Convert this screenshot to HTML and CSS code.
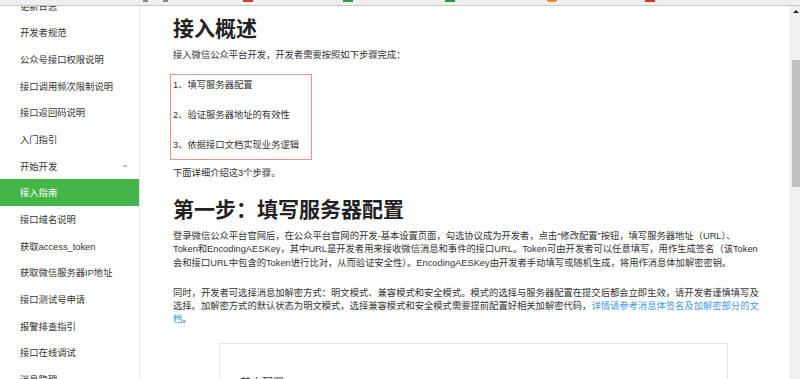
FILE: index.html
```html
<!DOCTYPE html>
<html lang="zh-CN">
<head>
  <meta charset="UTF-8">
  <meta name="viewport" content="width=device-width, initial-scale=1.0">
  <title>接入指南 - 微信公众平台开发文档</title>
  <link rel="stylesheet" href="styles.css">
</head>
<body>
  <div class="topbar">
    <span class="mark dark" style="left:143px"></span>
    <span class="mark dark" style="left:163px"></span>
    <span class="mark red" style="left:243px"></span>
    <span class="mark green" style="left:343px"></span>
    <span class="mark green" style="left:445px"></span>
    <span class="mark orange" style="left:547px"></span>
    <span class="mark red" style="left:645px"></span>
  </div>

  <div class="page">
    <aside class="sidebar">
      <ul class="menu">
        <li>更新日志</li>
        <li>开发者规范</li>
        <li>公众号接口权限说明</li>
        <li>接口调用频次限制说明</li>
        <li>接口返回码说明</li>
        <li>入门指引</li>
        <li class="group">开始开发 <span class="caret"></span></li>
        <li class="active">接入指南</li>
        <li>接口域名说明</li>
        <li>获取access_token</li>
        <li>获取微信服务器IP地址</li>
        <li>接口测试号申请</li>
        <li>报警排查指引</li>
        <li>接口在线调试</li>
        <li>消息管理</li>
      </ul>
    </aside>

    <main class="content">
      <h1>接入概述</h1>
      <p class="intro">接入微信公众平台开发，开发者需要按照如下步骤完成：</p>

      <div class="steps">
        <p>1、填写服务器配置</p>
        <p>2、验证服务器地址的有效性</p>
        <p>3、依据接口文档实现业务逻辑</p>
      </div>

      <p class="next">下面详细介绍这3个步骤。</p>

      <h1 class="step-title">第一步：填写服务器配置</h1>
      <p class="text">登录微信公众平台官网后，在公众平台官网的开发-基本设置页面，勾选协议成为开发者，点击“修改配置”按钮，填写服务器地址（URL）、<br>Token和EncodingAESKey，其中URL是开发者用来接收微信消息和事件的接口URL。Token可由开发者可以任意填写，用作生成签名（该Token会和接口URL中包含的Token进行比对，从而验证安全性）。EncodingAESKey由开发者手动填写或随机生成，将用作消息体加解密密钥。</p>
      <p class="text">同时，开发者可选择消息加解密方式：明文模式、兼容模式和安全模式。模式的选择与服务器配置在提交后都会立即生效，请开发者谨慎填写及选择。加解密方式的默认状态为明文模式，选择兼容模式和安全模式需要提前配置好相关加解密代码，<a href="#">详情请参考消息体签名及加解密部分的文档</a>。</p>

      <div class="panel">
        <div class="panel-title">基本配置</div>
      </div>
    </main>

    <div class="scrollbar">
      <span class="arrow"></span>
      <span class="thumb"></span>
    </div>
  </div>
</body>
</html>
```

FILE: styles.css
```css
body {
  margin: 0;
  height: 379px;
  overflow: hidden;
  font-family: "Liberation Sans", "Noto Sans CJK SC", sans-serif;
  color: #333;
  background: white;
}

.topbar {
  position: relative;
  height: 5px;
  background: #efefef;
  border-bottom: 1px solid #c9c9c9;
}

.mark {
  position: absolute;
  top: 0;
  width: 10px;
  height: 2px;
}

.mark.dark { background: #888; width: 5px; }
.mark.red { background: #d8352f; }
.mark.green { background: #2c9a45; }
.mark.orange { background: #f08a1c; border-radius: 0 0 5px 5px; }

.page {
  display: flex;
  height: 373px;
}

.sidebar {
  width: 139px;
  border-right: 1px solid #e6e6e6;
  overflow: hidden;
}

.menu {
  list-style: none;
  margin: -13.67px 0 0;
  padding: 0;
}

.menu li {
  display: flex;
  justify-content: space-between;
  align-items: center;
  height: 26.67px;
  padding: 0 11px 0 20px;
  font-size: 9.3px;
  color: #333;
}

.menu li.active {
  background: #44b549;
  color: white;
}

.caret {
  width: 0;
  height: 0;
  border-left: 3px solid transparent;
  border-right: 3px solid transparent;
  border-bottom: 3px solid #c4c4c4;
}

.content {
  flex: 1;
  padding: 0 0 0 33px;
  overflow: hidden;
}

.content h1 {
  margin: 8px 0 0;
  font-size: 21px;
  line-height: 30px;
  font-weight: bold;
  color: #222;
}

.content p {
  margin: 0;
  font-size: 9.3px;
  line-height: 13.33px;
}

.intro {
  margin-top: 5.35px !important;
}

.steps {
  display: flex;
  flex-direction: column;
  gap: 16.7px;
  width: 136px;
  margin: 11.35px 0 0 -3px;
  padding: 3.65px 2px 7px 2px;
  border: 1px solid #f88d8d;
}

.next {
  margin-top: 6.65px !important;
}

.content h1.step-title {
  margin-top: 15px;
}

.text {
  width: 594px;
}

.step-title + .text {
  margin-top: 5px !important;
}

.text + .text {
  margin-top: 16.65px !important;
}

.text a {
  color: #459ae9;
  text-decoration: none;
}

.panel {
  width: 487px;
  margin: 16.65px 0 0 46px;
  padding: 31px 0 0 20px;
  border: 1px solid #e4e4e4;
  border-bottom: none;
  height: 60px;
}

.panel-title {
  font-size: 11px;
  line-height: 16px;
}

.scrollbar {
  position: relative;
  width: 9px;
  background: #f0f0f0;
  border-left: 1px solid #e8e8e8;
}

.arrow {
  position: absolute;
  top: 4px;
  left: 2px;
  border-left: 3px solid transparent;
  border-right: 3px solid transparent;
  border-bottom: 3px solid #222;
}

.thumb {
  position: absolute;
  top: 54px;
  left: 1px;
  right: 0;
  height: 127px;
  background: #c1c1c1;
}
```
